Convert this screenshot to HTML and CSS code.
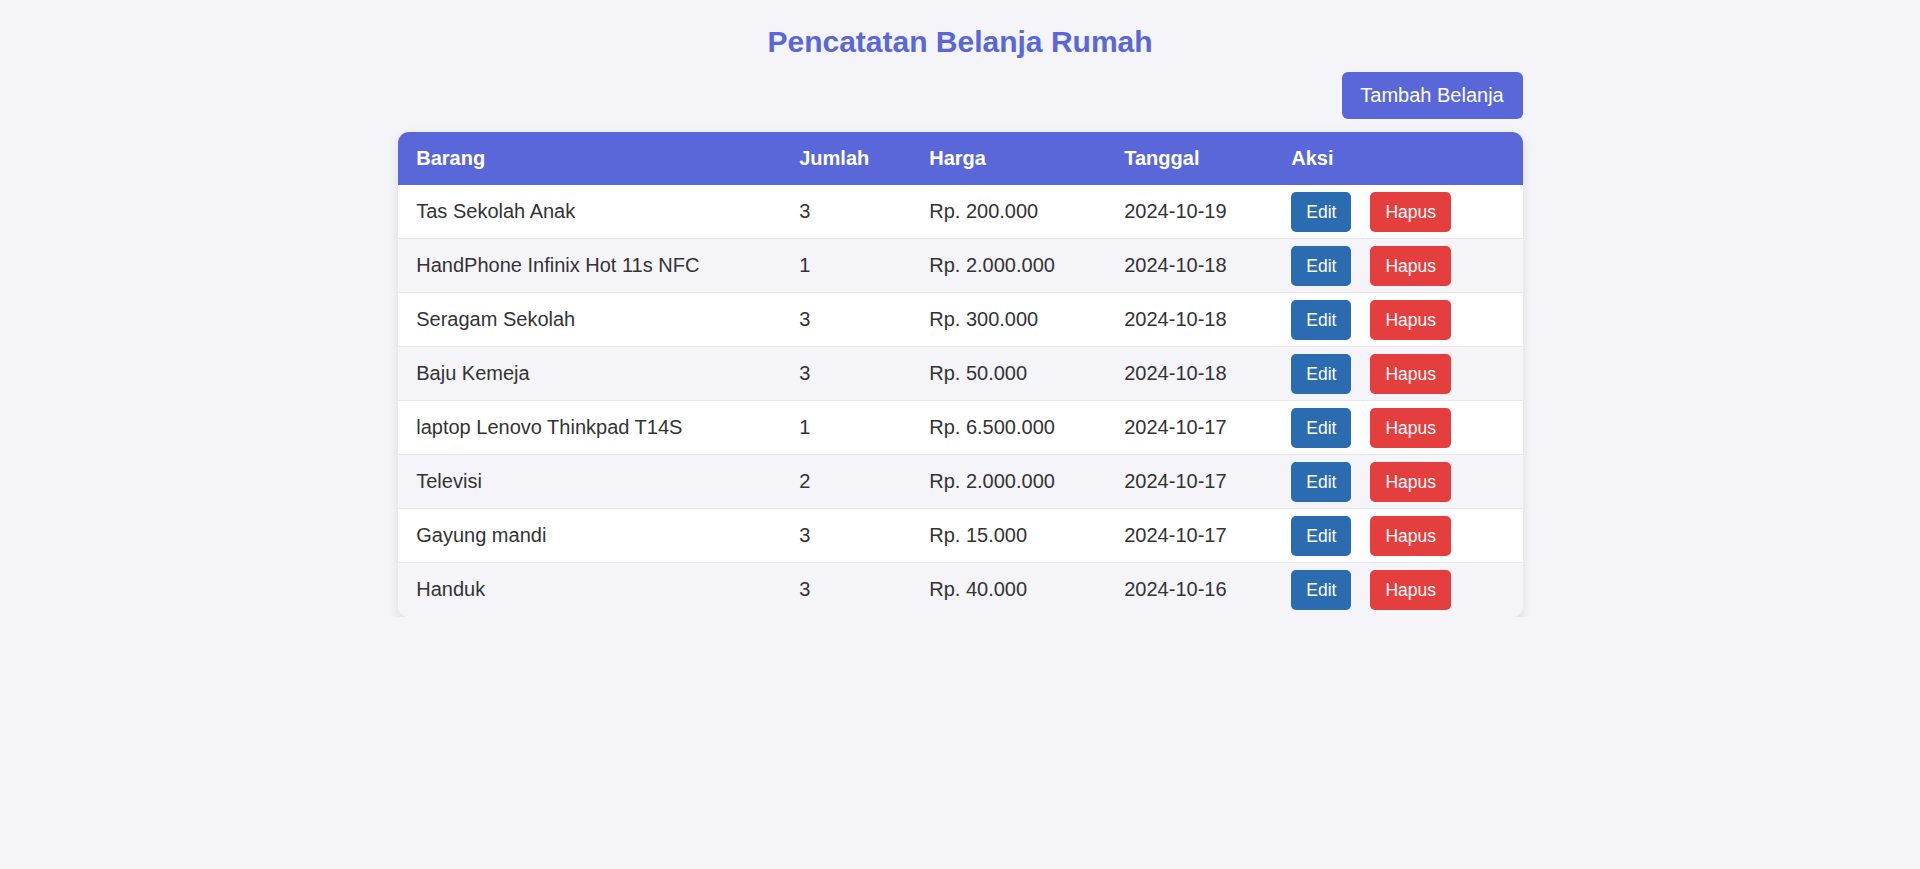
FILE: index.html
```html
<!DOCTYPE html>
<html lang="id">
<head>
<meta charset="utf-8">
<title>Pencatatan Belanja Rumah</title>
<link rel="stylesheet" href="styles.css">
</head>
<body>
<div class="container">
  <h1 class="title">Pencatatan Belanja Rumah</h1>
  <div class="toolbar">
    <button class="btn btn-add">Tambah Belanja</button>
  </div>
  <div class="table-wrap">
    <table class="table">
      <colgroup>
        <col class="c-barang">
        <col class="c-jumlah">
        <col class="c-harga">
        <col class="c-tanggal">
        <col class="c-aksi">
      </colgroup>
      <thead>
        <tr><th>Barang</th><th>Jumlah</th><th>Harga</th><th>Tanggal</th><th>Aksi</th></tr>
      </thead>
      <tbody>
        <tr><td>Tas Sekolah Anak</td><td>3</td><td>Rp. 200.000</td><td>2024-10-19</td><td><div class="actions"><button class="btn btn-edit">Edit</button><button class="btn btn-del">Hapus</button></div></td></tr>
        <tr><td>HandPhone Infinix Hot 11s NFC</td><td>1</td><td>Rp. 2.000.000</td><td>2024-10-18</td><td><div class="actions"><button class="btn btn-edit">Edit</button><button class="btn btn-del">Hapus</button></div></td></tr>
        <tr><td>Seragam Sekolah</td><td>3</td><td>Rp. 300.000</td><td>2024-10-18</td><td><div class="actions"><button class="btn btn-edit">Edit</button><button class="btn btn-del">Hapus</button></div></td></tr>
        <tr><td>Baju Kemeja</td><td>3</td><td>Rp. 50.000</td><td>2024-10-18</td><td><div class="actions"><button class="btn btn-edit">Edit</button><button class="btn btn-del">Hapus</button></div></td></tr>
        <tr><td>laptop Lenovo Thinkpad T14S</td><td>1</td><td>Rp. 6.500.000</td><td>2024-10-17</td><td><div class="actions"><button class="btn btn-edit">Edit</button><button class="btn btn-del">Hapus</button></div></td></tr>
        <tr><td>Televisi</td><td>2</td><td>Rp. 2.000.000</td><td>2024-10-17</td><td><div class="actions"><button class="btn btn-edit">Edit</button><button class="btn btn-del">Hapus</button></div></td></tr>
        <tr><td>Gayung mandi</td><td>3</td><td>Rp. 15.000</td><td>2024-10-17</td><td><div class="actions"><button class="btn btn-edit">Edit</button><button class="btn btn-del">Hapus</button></div></td></tr>
        <tr><td>Handuk</td><td>3</td><td>Rp. 40.000</td><td>2024-10-16</td><td><div class="actions"><button class="btn btn-edit">Edit</button><button class="btn btn-del">Hapus</button></div></td></tr>
      </tbody>
    </table>
  </div>
</div>
</body>
</html>
```
FILE: styles.css
```css
html, body {
  margin: 0;
  padding: 0;
}
body {
  background: #f4f4f9;
  font-family: "Liberation Sans", Arial, sans-serif;
  color: #333;
}
.container {
  width: 1125px;
  margin: 0 auto;
  padding-top: 25px;
}
.title {
  margin: 0;
  text-align: center;
  font-size: 30px;
  line-height: 34px;
  font-weight: bold;
  color: #5a67d8;
}
.toolbar {
  display: flex;
  justify-content: flex-end;
  margin-top: 13px;
  margin-bottom: 13px;
}
.btn {
  border: none;
  color: #fff;
  font-family: "Liberation Sans", Arial, sans-serif;
  cursor: pointer;
}
.btn-add {
  background: #5a67d8;
  font-size: 20px;
  line-height: 23px;
  padding: 12px 18.75px;
  border-radius: 6px;
}
.table-wrap {
  background: #fff;
  border-radius: 11px;
  overflow: hidden;
  box-shadow: 0 4px 12px rgba(0, 0, 0, 0.1);
}
.table {
  width: 100%;
  border-collapse: collapse;
  table-layout: fixed;
  font-size: 20px;
  line-height: 23px;
}
.c-barang { width: 383px; }
.c-jumlah { width: 130px; }
.c-harga { width: 195px; }
.c-tanggal { width: 167px; }
.c-aksi { width: 250px; }
.table th {
  background: #5a67d8;
  color: #fff;
  font-weight: bold;
  text-align: left;
  padding: 15px 18.75px;
}
.table td {
  padding: 6.5px 18.75px 6.5px;
  border-bottom: 1px solid #e8e8ee;
  vertical-align: middle;
  white-space: nowrap;
}
.table tbody tr:nth-child(even) td {
  background: #f4f4f9;
}
.table tbody tr:last-child td {
  border-bottom: none;
  padding-bottom: 7px;
}
.actions {
  display: flex;
  gap: 19px;
}
.btn-edit,
.btn-del {
  font-size: 17.5px;
  line-height: 20px;
  padding: 10px 15px;
  border-radius: 5px;
}
.btn-edit {
  background: #2b6cb0;
}
.btn-del {
  background: #e53e3e;
}
```
